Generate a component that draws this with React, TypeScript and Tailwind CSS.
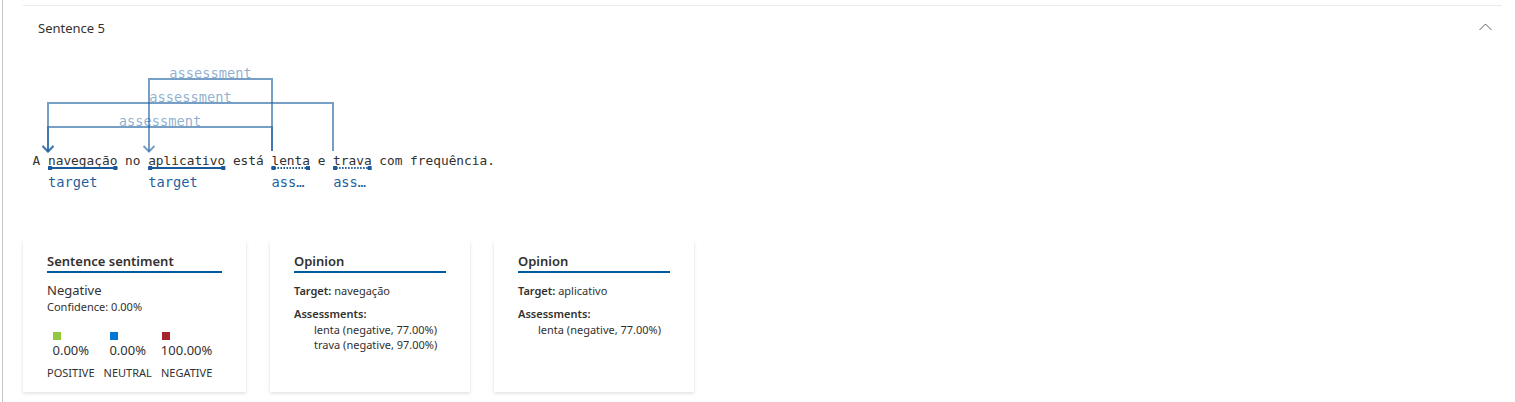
import React from 'react';

const ui = { fontFamily: '"Noto Sans", "Open Sans", sans-serif' };
const mono = '"DejaVu Sans Mono", "Liberation Mono", monospace';

const BLUE = '#1d5fa0';

// word start x positions (page coords) for the monospace sentence
const X0 = 32.6;
const ADV = 7.706;
const wx = (i: number) => X0 + i * ADV;

type Arc = { from: number; to: number; y: number };

const arcs: Arc[] = [
  { from: 272, to: 149, y: 79 },
  { from: 333, to: 48, y: 103 },
  { from: 272, to: 48, y: 127 },
];

const spans = [
  { start: wx(2), len: 9, label: 'target', dotted: false },
  { start: wx(15), len: 10, label: 'target', dotted: false },
  { start: wx(31), len: 5, label: 'ass…', dotted: true },
  { start: wx(39), len: 5, label: 'ass…', dotted: true },
];

const Diagram: React.FC = () => (
  <svg width={520} height={150} viewBox="23 60 520 150" className="block">
    {arcs.map((a, i) => (
      <g key={i} stroke={BLUE} strokeOpacity={0.6} strokeWidth={2} fill="none">
        <path d={`M ${a.from} 151 V ${a.y} H ${a.to} V 151.5`} />
        <path d={`M ${a.to - 5.5} 146 L ${a.to} 151.5 L ${a.to + 5.5} 146`} />
      </g>
    ))}
    {arcs.map((a, i) => (
      <text
        key={'l' + i}
        x={(a.from + a.to) / 2}
        y={a.y - 1}
        textAnchor="middle"
        fontFamily={mono}
        fontSize={13.7}
        fill={BLUE}
        fillOpacity={0.5}
      >
        assessment
      </text>
    ))}
    <text x={X0} y={164.5} fontFamily={mono} fontSize={12.8} fill="#323130">
      A navegação no aplicativo está lenta e trava com frequência.
    </text>
    {spans.map((s, i) => {
      const end = s.start + s.len * ADV;
      return (
        <g key={'s' + i}>
          <line
            x1={s.start}
            x2={end}
            y1={168}
            y2={168}
            stroke="#1b5b9b"
            strokeWidth={1.8}
            strokeDasharray={s.dotted ? '1.5 1.5' : undefined}
          />
          <rect x={s.start} y={166} width={4} height={4} fill="#1b5b9b" />
          <rect x={end - 4} y={166} width={4} height={4} fill="#1b5b9b" />
          <text x={s.start} y={187} fontFamily={mono} fontSize={13.7} fill="#1f5f9e">
            {s.label}
          </text>
        </g>
      );
    })}
  </svg>
);

const Card: React.FC<{ title: string; width: string; children: React.ReactNode }> = ({ title, width, children }) => (
  <div
    className={`${width} h-[152px] bg-white px-[24px] pt-[11px] shadow-[0_1.6px_3.6px_0_rgba(0,0,0,0.13),0_0.3px_0.9px_0_rgba(0,0,0,0.11)]`}
  >
    <div className="border-b-2 border-[#005a9e] text-[13px] leading-[20px] font-semibold text-[#323130]">{title}</div>
    {children}
  </div>
);

const Score: React.FC<{ color: string; value: string; label: string }> = ({ color, value, label }) => (
  <div className="flex flex-col items-center">
    <div className="flex flex-col items-start">
      <span className={`ml-[1px] w-[8px] h-[8px] ${color}`} />
      <span className="mt-[1px] text-[13px] leading-[18px]">{value}</span>
    </div>
    <span className="mt-[6px] text-[11px] leading-[15px]">{label}</span>
  </div>
);

export default function App() {
  return (
    <div className="w-[1515px] h-[402px] overflow-hidden bg-white text-[#323130]" style={ui}>
      <div className="ml-[2px] h-full border-l border-[#c8c6c4] pl-[20px] pr-[13px] pt-[5px]">
        <section className="border-t border-[#edebe9]">
          <div className="flex h-[44px] items-center justify-between pl-[15px] pr-[10px]">
            <span className="text-[13px] leading-[18px]">Sentence 5</span>
            <svg width={13} height={8} viewBox="0 0 13 8" className="mb-[2px]">
              <path d="M0.5 7 L6.5 1 L12.5 7" stroke="#605e5c" strokeWidth={1} fill="none" />
            </svg>
          </div>
          <div className="mt-[10px]">
            <Diagram />
          </div>
          <div className="mt-[30px] flex gap-[24px]">
            <Card title="Sentence sentiment" width="w-[223px]">
              <div className="mt-[8px] text-[13px] leading-[18px]">Negative</div>
              <div className="text-[11px] leading-[15px]">Confidence: 0.00%</div>
              <div className="mt-[18px] flex gap-[9px]">
                <Score color="bg-[#92c83e]" value="0.00%" label="POSITIVE" />
                <Score color="bg-[#0078d4]" value="0.00%" label="NEUTRAL" />
                <Score color="bg-[#a4262c]" value="100.00%" label="NEGATIVE" />
              </div>
            </Card>
            <Card title="Opinion" width="w-[200px]">
              <div className="mt-[10px] text-[11px] leading-[15px]">
                <span className="font-semibold">Target:</span> navegação
              </div>
              <div className="mt-[8px] text-[11px] leading-[15px] font-semibold">Assessments:</div>
              <div className="mt-[1px] ml-[20px] text-[11px] leading-[15px]">
                <div>lenta (negative, 77.00%)</div>
                <div>trava (negative, 97.00%)</div>
              </div>
            </Card>
            <Card title="Opinion" width="w-[200px]">
              <div className="mt-[10px] text-[11px] leading-[15px]">
                <span className="font-semibold">Target:</span> aplicativo
              </div>
              <div className="mt-[8px] text-[11px] leading-[15px] font-semibold">Assessments:</div>
              <div className="mt-[1px] ml-[20px] text-[11px] leading-[15px]">
                <div>lenta (negative, 77.00%)</div>
              </div>
            </Card>
          </div>
        </section>
      </div>
    </div>
  );
}
